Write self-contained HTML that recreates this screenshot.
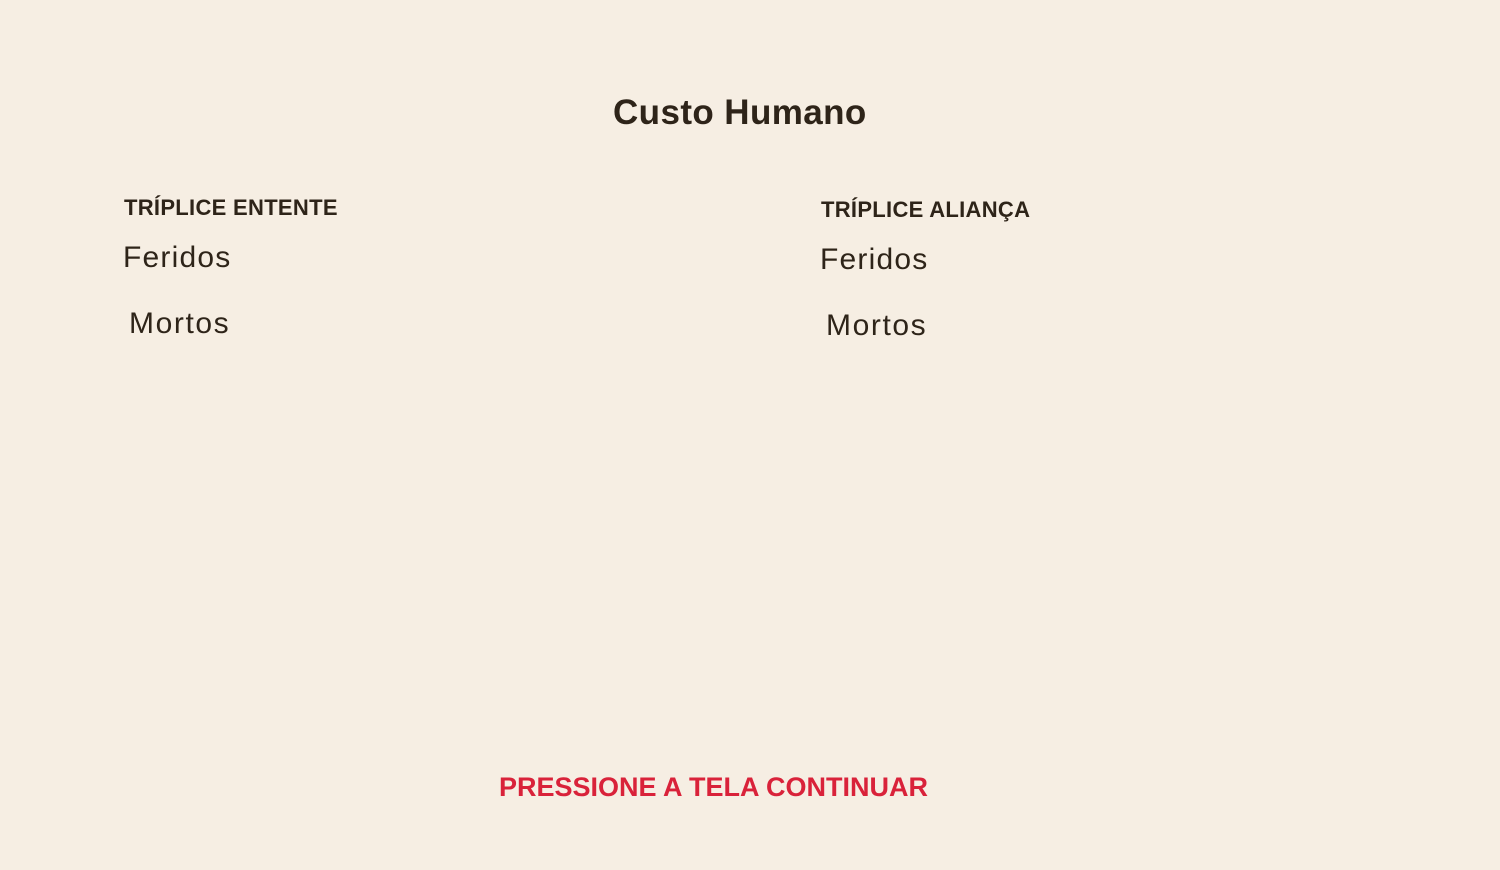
<!DOCTYPE html>
<html><head><meta charset="utf-8"><style>
html,body{margin:0;padding:0;width:1500px;height:870px;background:#f6eee3;overflow:hidden;font-family:"Liberation Sans",sans-serif;color:#2e2419}
div{position:absolute;white-space:nowrap;line-height:1}
.h{font-weight:bold;font-size:22px;letter-spacing:0.3px}
.n{font-size:30px;font-weight:normal;color:#2e2419;letter-spacing:1.2px}
</style></head><body>
<div style="left:613px;top:95px;font-size:35px;font-weight:bold;letter-spacing:0.4px">Custo Humano</div>
<div class="h" style="left:124px;top:197px">TRÍPLICE ENTENTE</div>
<div class="n" style="left:123px;top:243px">Feridos</div>
<div class="n" style="left:129px;top:309px;letter-spacing:1.6px">Mortos</div>
<div class="h" style="left:821px;top:199px">TRÍPLICE ALIANÇA</div>
<div class="n" style="left:820px;top:245px">Feridos</div>
<div class="n" style="left:826px;top:311px;letter-spacing:1.6px">Mortos</div>
<div style="left:499px;top:774px;font-size:27px;font-weight:bold;color:#d9223a">PRESSIONE A TELA CONTINUAR</div>
</body></html>
